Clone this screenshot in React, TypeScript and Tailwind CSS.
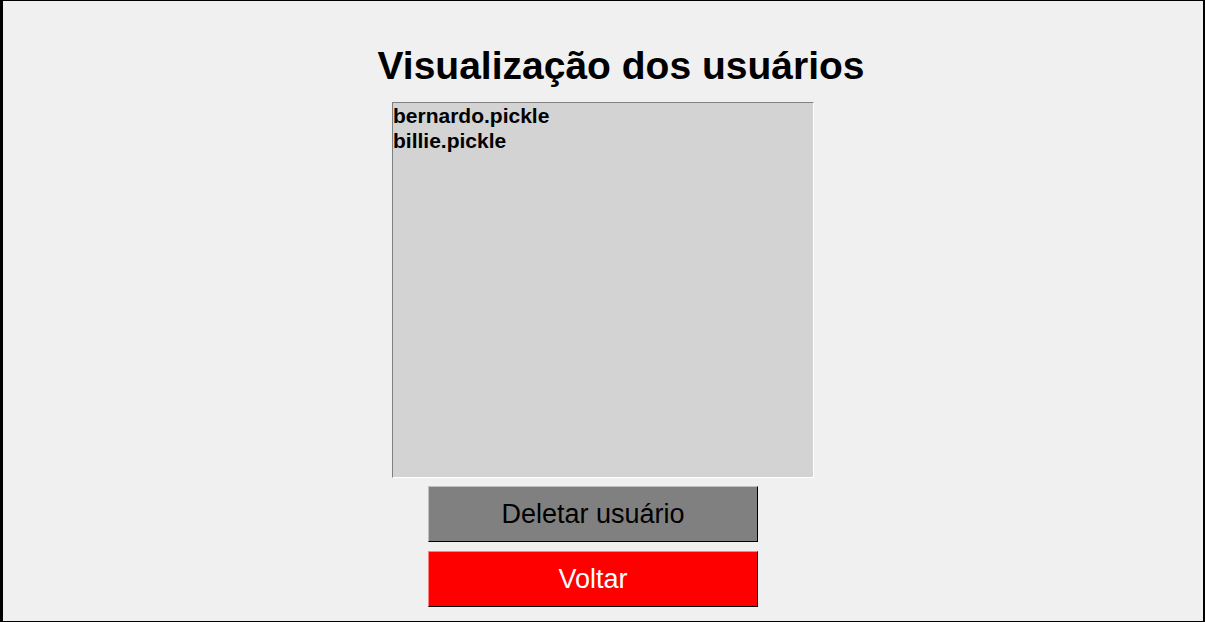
import React from 'react';

const users = ['bernardo.pickle', 'billie.pickle'];

export default function App() {
  return (
    <div className="w-[1205px] h-[622px] bg-black pl-[3px] pt-[1px] pr-[2px] pb-[1px] font-['Liberation_Sans',Arial,sans-serif]">
      <div className="w-full h-full bg-[#f0f0f0] flex flex-col items-center pt-[42px]">
        {/* Title */}
        <h1 className="ml-[36px] text-[39px] leading-[46px] font-bold text-black">
          Visualização dos usuários
        </h1>

        {/* User list */}
        <div className="mt-[13px] w-[422px] h-[376px] bg-[#d3d3d3] border border-t-[#808080] border-l-[#808080] border-b-white border-r-white">
          {users.map(u => (
            <div key={u} className="text-[21px] leading-[25px] font-bold text-black">
              {u}
            </div>
          ))}
        </div>

        {/* Buttons */}
        <div className="mr-[20px] mt-[8px] flex flex-col gap-[9px]">
          <button className="w-[330px] h-[56px] bg-[#808080] border border-t-[#c0c0c0] border-l-[#c0c0c0] border-b-black border-r-black text-[27px] text-black">
            Deletar usuário
          </button>
          <button className="w-[330px] h-[56px] bg-[#ff0000] border border-t-[#ff8080] border-l-[#ff8080] border-b-black border-r-black text-[27px] text-white">
            Voltar
          </button>
        </div>
      </div>
    </div>
  );
}
